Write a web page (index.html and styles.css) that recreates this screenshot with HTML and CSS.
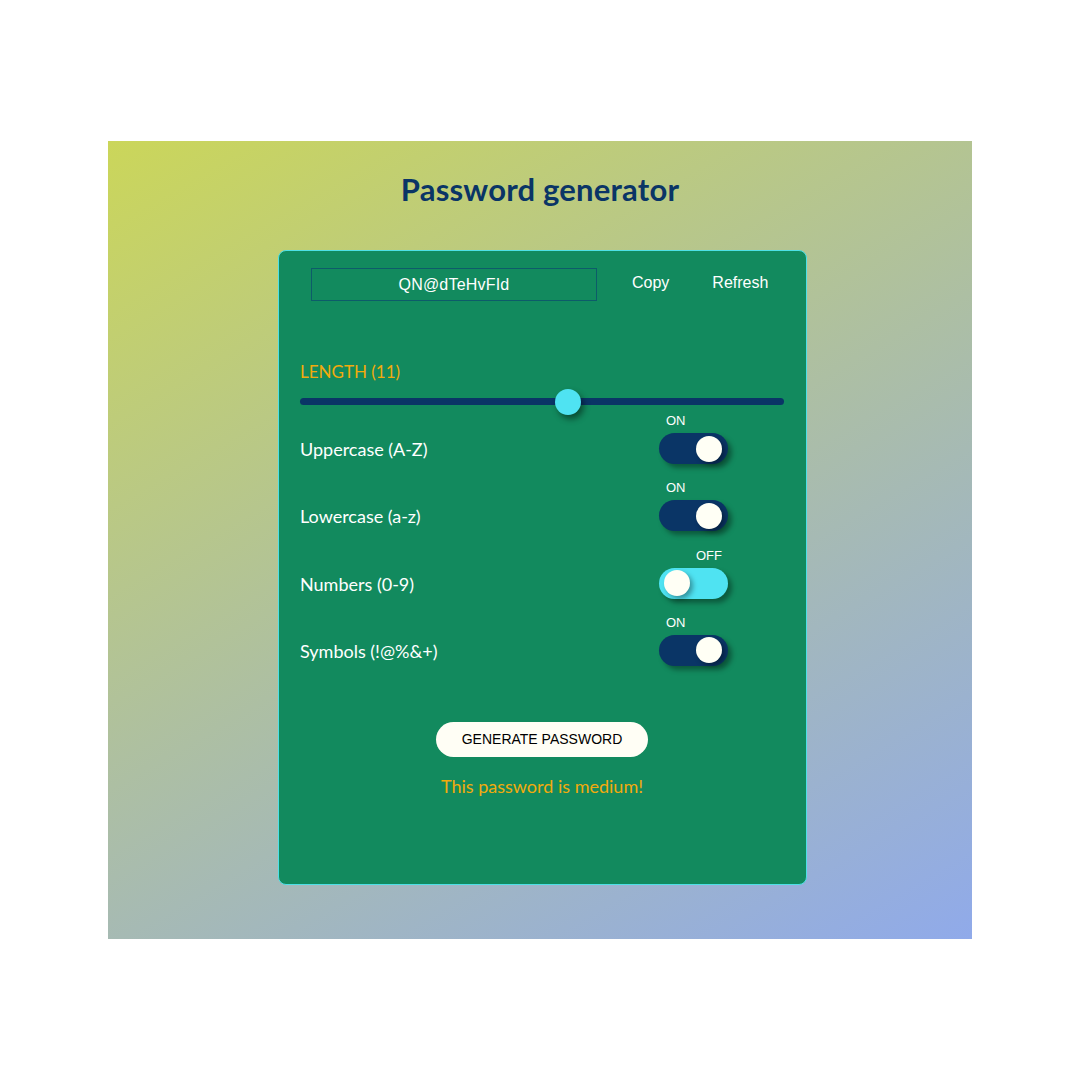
FILE: index.html
```html
<!DOCTYPE html>
<html>
<head>
<meta charset="utf-8">
<link rel="stylesheet" href="styles.css">
</head>
<body>
<div class="stage">
  <h1 class="title">Password generator</h1>
  <div class="card">
    <div class="top">
      <div class="output">QN@dTeHvFId</div>
      <button class="link">Copy</button>
      <button class="link">Refresh</button>
    </div>
    <div class="length">LENGTH (11)</div>
    <div class="slider">
      <div class="track"></div>
      <div class="thumb" style="left: 255px"></div>
    </div>
    <div class="rows">
      <div class="row">
        <span class="label">Uppercase (A-Z)</span>
        <div class="toggle on"><span class="state">ON</span><span class="knob"></span></div>
      </div>
      <div class="row">
        <span class="label">Lowercase (a-z)</span>
        <div class="toggle on"><span class="state">ON</span><span class="knob"></span></div>
      </div>
      <div class="row">
        <span class="label">Numbers (0-9)</span>
        <div class="toggle off"><span class="state">OFF</span><span class="knob"></span></div>
      </div>
      <div class="row">
        <span class="label">Symbols (!@%&amp;+)</span>
        <div class="toggle on"><span class="state">ON</span><span class="knob"></span></div>
      </div>
    </div>
    <div class="actions">
      <button class="generate">GENERATE PASSWORD</button>
      <div class="strength">This password is medium!</div>
    </div>
  </div>
</div>
</body>
</html>
```

FILE: styles.css
```css
html, body {
  margin: 0;
  padding: 0;
  background: #ffffff;
}
body {
  padding-top: 141px;
  font-family: "Lato", "Noto Sans", sans-serif;
}
.stage {
  width: 864px;
  height: 798px;
  margin: 0 auto;
  background: linear-gradient(150deg, #cbd65a 0%, #adbfa3 50%, #90aaea 100%);
  display: flex;
  flex-direction: column;
  align-items: center;
  box-sizing: border-box;
  padding-top: 29px;
}
.title {
  margin: 0;
  font-size: 31px;
  font-weight: 700;
  color: #0a3566;
  line-height: 38px;
  letter-spacing: 0.2px;
}
.card {
  margin-top: 42px;
  margin-left: 5px;
  width: 529px;
  height: 635px;
  box-sizing: border-box;
  background: #128a5e;
  border: 1.5px solid #4ee0e6;
  border-radius: 8px;
  padding: 17px 22px 0 21px;
}
.top {
  display: flex;
  align-items: center;
  height: 33px;
  padding-left: 11px;
}
.output {
  width: 286px;
  height: 33px;
  box-sizing: border-box;
  border: 1px solid #0d5c6a;
  color: #ffffff;
  font-family: "Liberation Sans", Arial, sans-serif;
  font-size: 16px;
  display: flex;
  align-items: center;
  justify-content: center;
  letter-spacing: 0.2px;
}
.link {
  background: none;
  border: none;
  color: #ffffff;
  font-family: "Liberation Sans", Arial, sans-serif;
  font-size: 16px;
  padding: 0;
  margin-top: -4px;
}
.link:first-of-type {
  margin-left: 35px;
}
.link + .link {
  margin-left: 43px;
}
.length {
  margin-top: 60px;
  color: #f2aa0c;
  font-size: 17px;
  line-height: 22px;
}
.slider {
  position: relative;
  margin-top: 15px;
  height: 8px;
}
.track {
  height: 7px;
  background: #0a3566;
  border-radius: 4px;
}
.thumb {
  position: absolute;
  top: -9px;
  width: 26px;
  height: 26px;
  border-radius: 50%;
  background: #4fe3f2;
  box-shadow: 3px 4px 6px rgba(0, 0, 0, 0.45);
}
.rows {
  margin-top: 6px;
  display: flex;
  flex-direction: column;
}
.row {
  display: flex;
  align-items: flex-end;
  justify-content: space-between;
  height: 67.3px;
  padding-right: 56px;
}
.row:first-child {
  height: 52px;
}
.label {
  color: #ffffff;
  font-size: 18px;
  line-height: 22px;
  padding-bottom: 4px;
}
.toggle {
  position: relative;
  width: 69px;
  height: 31px;
  border-radius: 16px;
  box-shadow: 4px 4px 5px rgba(0, 0, 0, 0.35);
}
.toggle.on {
  background: #0a3566;
}
.toggle.off {
  background: #4fe3f2;
}
.knob {
  position: absolute;
  top: 2.5px;
  width: 26px;
  height: 26px;
  border-radius: 50%;
  background: #fffff5;
  box-shadow: 3px 3px 5px rgba(0, 0, 0, 0.35);
}
.toggle.on .knob {
  left: 37px;
}
.toggle.off .knob {
  left: 5px;
}
.state {
  position: absolute;
  top: -20px;
  color: #ffffff;
  font-family: "Liberation Sans", Arial, sans-serif;
  font-size: 13px;
}
.toggle.on .state {
  left: 7px;
}
.toggle.off .state {
  left: 37px;
}
.actions {
  display: flex;
  flex-direction: column;
  align-items: center;
  margin-top: 56px;
}
.generate {
  width: 212px;
  height: 35px;
  border: none;
  border-radius: 18px;
  background: #fffef5;
  color: #000000;
  font-family: "Liberation Sans", Arial, sans-serif;
  font-size: 14px;
  padding: 0;
}
.strength {
  margin-top: 18px;
  color: #f2aa0c;
  font-size: 18px;
  line-height: 22px;
}
```
